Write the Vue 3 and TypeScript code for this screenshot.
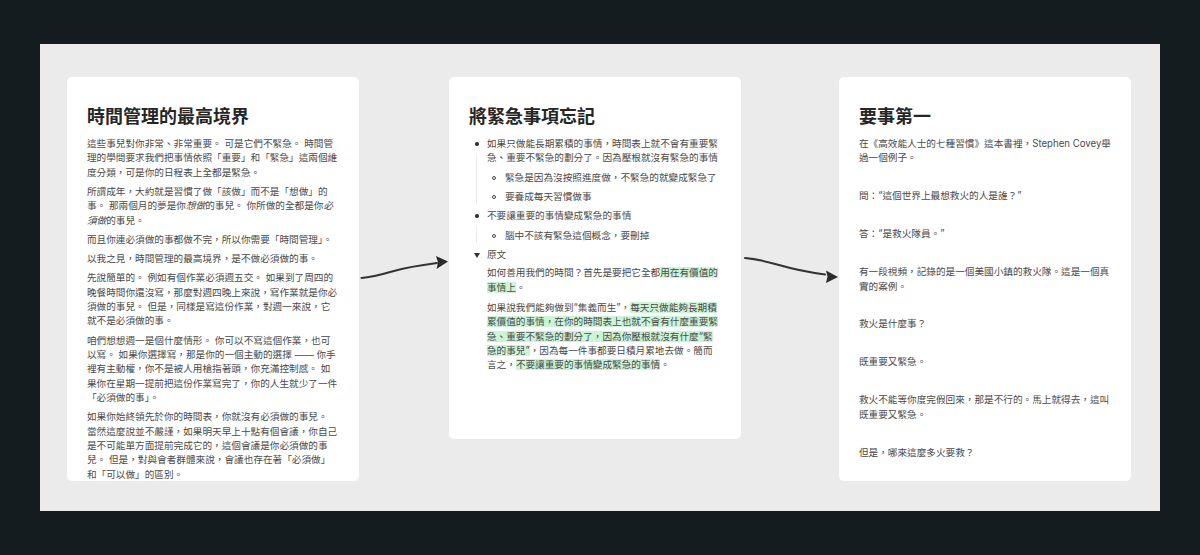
<script setup lang="ts">
const paragraphs: string[] = [
  '在《高效能人士的七種習慣》這本書裡，Stephen Covey舉過一個例子。',
  '問：“這個世界上最想救火的人是誰？”',
  '答：“是救火隊員。”',
  '有一段視頻，記錄的是一個美國小鎮的救火隊。這是一個真實的案例。',
  '救火是什麼事？',
  '既重要又緊急。',
  '救火不能等你度完假回來，那是不行的。馬上就得去，這叫既重要又緊急。',
  '但是，哪來這麼多火要救？',
]
</script>

<template>
  <div class="page">
    <main class="canvas">
      <article class="card first">
        <h2>時間管理的最高境界</h2>
        <p>這些事兒對你非常、非常重要。 可是它們不緊急。 時間管理的學問要求我們把事情依照「重要」和「緊急」這兩個維度分類，可是你的日程表上全都是緊急。</p>
        <p>所謂成年，大約就是習慣了做「該做」而不是「想做」的事。 那兩個月的夢是你<em>想做</em>的事兒。 你所做的全都是你<em>必須做</em>的事兒。</p>
        <p>而且你連必須做的事都做不完，所以你需要「時間管理」。</p>
        <p>以我之見，時間管理的最高境界，是不做必須做的事。</p>
        <p>先說簡單的。 例如有個作業必須週五交。 如果到了周四的晚餐時間你還沒寫，那麼對週四晚上來說，寫作業就是你必須做的事兒。 但是，同樣是寫這份作業，對週一來說，它就不是必須做的事。</p>
        <p>咱們想想週一是個什麼情形。 你可以不寫這個作業，也可以寫。 如果你選擇寫，那是你的一個主動的選擇 —— 你手裡有主動權，你不是被人用槍指著頭，你充滿控制感。 如果你在星期一提前把這份作業寫完了，你的人生就少了一件「必須做的事」。</p>
        <p>如果你始終領先於你的時間表，你就沒有必須做的事兒。 當然這麼說並不嚴謹，如果明天早上十點有個會議，你自己是不可能單方面提前完成它的，這個會議是你必須做的事兒。 但是，對與會者群體來說，會議也存在著「必須做」和「可以做」的區別。</p>
      </article>

      <div class="link">
        <svg width="90" height="40" viewBox="0 0 90 40" fill="none">
          <path d="M2.500 31C13 30.500 23 27.500 35 24C47 20.500 59 18.500 78 16" stroke="#333" stroke-width="2" stroke-linecap="round" />
          <path d="M89 14.500L77 9L79 15.500L77.500 22Z" fill="#2b2b2b" />
        </svg>
      </div>

      <article class="card second">
        <h2>將緊急事項忘記</h2>
        <ul class="outline">
          <li>
            <span class="dot"></span>
            <div>如果只做能長期累積的事情，時間表上就不會有重要緊急、重要不緊急的劃分了。因為壓根就沒有緊急的事情</div>
            <ul class="sub">
              <li><span class="ring"></span>緊急是因為沒按照進度做，不緊急的就變成緊急了</li>
              <li><span class="ring"></span>要養成每天習慣做事</li>
            </ul>
          </li>
          <li>
            <span class="dot"></span>
            <div>不要讓重要的事情變成緊急的事情</div>
            <ul class="sub">
              <li><span class="ring"></span>腦中不該有緊急這個概念，要刪掉</li>
            </ul>
          </li>
          <li>
            <span class="tri"></span>
            <div>原文</div>
            <div class="quote">
              <p>如何善用我們的時間？首先是要把它全都<mark>用在有價值的事情上</mark>。</p>
              <p>如果說我們能夠做到“集義而生”，<mark>每天只做能夠長期積累價值的事情，在你的時間表上也就不會有什麼重要緊急、重要不緊急的劃分了，因為你壓根就沒有什麼“緊急的事兒”</mark>，因為每一件事都要日積月累地去做。簡而言之，<mark>不要讓重要的事情變成緊急的事情</mark>。</p>
            </div>
          </li>
        </ul>
      </article>

      <div class="link wide">
        <svg width="98" height="40" viewBox="0 0 98 40" fill="none">
          <path d="M4 3C16 4 26 6.500 38 10C50 13.500 62 16.500 84 19.500" stroke="#333" stroke-width="2" stroke-linecap="round" />
          <path d="M97 22L85 15.500L86.500 21.500L85 28Z" fill="#2b2b2b" />
        </svg>
      </div>

      <article class="card third">
        <h2>要事第一</h2>
        <p v-for="(text, i) in paragraphs" :key="i">{{ text }}</p>
      </article>
    </main>
  </div>
</template>

<style>
html, body { margin: 0; background: #151c1f; }
</style>

<style scoped>
.page {
  width: 1200px;
  height: 555px;
  box-sizing: border-box;
  padding: 44px 40px;
  background: #151c1f;
  font-family: "Inter", "Noto Sans CJK TC", sans-serif;
}
.canvas {
  display: flex;
  align-items: flex-start;
  height: 467px;
  box-sizing: border-box;
  padding: 33px 29px 0 27px;
  background: #ebebeb;
}
.card {
  flex: none;
  width: 292px;
  box-sizing: border-box;
  padding: 26px 20px 0;
  overflow: hidden;
  background: #fff;
  border-radius: 5px;
  color: #4a4a4a;
  font-size: 9.65px;
  line-height: 14.35px;
}
.first, .third { height: 404px; }
.second { height: 362px; }
h2 {
  margin: 0 0 6px;
  color: #262626;
  font-size: 18px;
  line-height: 28px;
  font-weight: 700;
}
p { margin: 0 0 5px; }
em { font-style: italic; }
.first p { margin-bottom: 4.900px; }
.third p { margin-bottom: 23.600px; }
.link { flex: none; width: 90px; height: 40px; margin-top: 170px; }
.link.wide { width: 98px; margin-top: 178px; }
.link svg { display: block; }
.outline, .sub { list-style: none; margin: 0; padding: 0; }
.outline { padding-left: 18px; }
.outline > li { position: relative; margin-bottom: 5px; }
.outline > li:not(:last-child)::before {
  content: "";
  position: absolute;
  left: -11px;
  top: 17px;
  bottom: 0;
  width: 1px;
  background: #ececec;
}
.dot {
  position: absolute;
  left: -12px;
  top: 5px;
  width: 3.500px;
  height: 3.500px;
  border-radius: 50%;
  background: #333;
}
.tri {
  position: absolute;
  left: -13.500px;
  top: 5px;
  border-left: 3px solid transparent;
  border-right: 3px solid transparent;
  border-top: 5px solid #333;
}
.sub { padding-left: 18px; margin-top: 5px; }
.sub > li { position: relative; margin-bottom: 5px; }
.sub > li:last-child { margin-bottom: 0; }
.ring {
  position: absolute;
  left: -13px;
  top: 5px;
  width: 4px;
  height: 4px;
  box-sizing: border-box;
  border: 1px solid #444;
  border-radius: 50%;
}
.quote { margin-top: 4px; }
.quote p { margin-bottom: 6px; }
mark { background: #ccf5d8; color: inherit; }
</style>
